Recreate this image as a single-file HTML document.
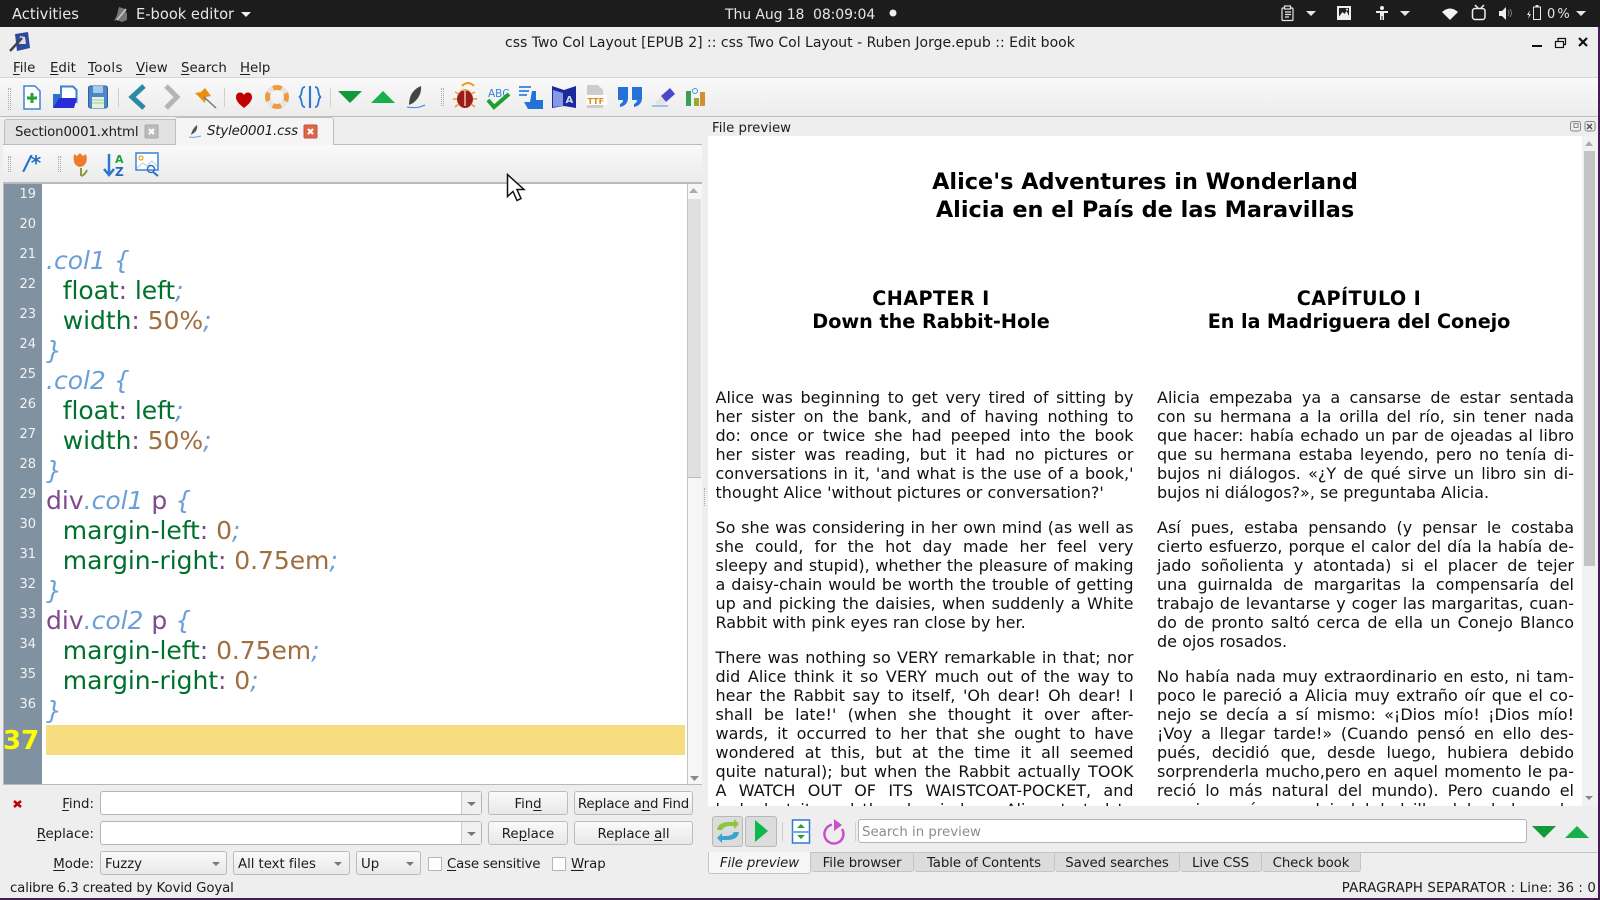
<!DOCTYPE html>
<html><head><meta charset="utf-8"><style>
html,body{margin:0;padding:0;width:1600px;height:900px;overflow:hidden;background:#eee;font-family:"DejaVu Sans","Liberation Sans",sans-serif;color:#1c1c1c}
div,span.a{position:absolute}
.t{position:absolute;white-space:nowrap;font-size:13.33px;line-height:16px}
u{text-underline-offset:2px}
.top{color:#e6e6e6;font-size:14.67px;line-height:18px;top:6px}
.sep{position:absolute;width:1px;background:#d0d0d0}
.dots{position:absolute;width:3px;border-left:1px dotted #aaa;border-right:1px dotted #aaa;box-sizing:border-box}
.tb{left:0;width:1598px;background:linear-gradient(#f9f9f9,#ececec)}
.n{position:absolute;left:4px;width:32px;text-align:right;color:#f2f2f2;font-size:13px;line-height:16px}
.c{position:absolute;left:46px;white-space:pre;font-size:25px;line-height:30px;color:#00702d;margin-top:1px}
.c.i{left:47px;letter-spacing:-.06px}
.s{color:#6a9fd8;font-style:italic}.k{color:#7c4b8e}.v{color:#9e6e3f}
.inp{position:absolute;background:#fff;border:1px solid #b4b4b4;border-radius:3px;box-sizing:border-box}
.btn{position:absolute;box-sizing:border-box;height:24px;border:1px solid #bbb;border-radius:3px;background:linear-gradient(#fafafa,#e8e8e8);text-align:center;font-size:13.33px;line-height:25px;white-space:nowrap;letter-spacing:-.05px}
.ptab{position:absolute;top:852px;height:20px;background:#dcdcdc;border:1px solid #c4c4c4;border-left:0;box-sizing:border-box;text-align:center;font-size:13.33px;line-height:21px;border-radius:0 0 3px 3px;letter-spacing:-.1px;white-space:nowrap}
.col{position:absolute;width:418px;font-size:16px;line-height:19px;color:#111}
.col span{display:block;white-space:nowrap;text-align:justify;text-align-last:justify;height:19px}
.col span.e{text-align:left;text-align-last:left}
.col i{display:block;height:16px}
.h{position:absolute;text-align:center;font-weight:bold;color:#000;white-space:nowrap}
.h b{letter-spacing:.4px}
</style></head><body>
<div style="left:0;top:0;width:1600px;height:27px;background:#1c1c1c"></div>
<div style="left:1598px;top:27px;width:2px;height:873px;background:#451a55"></div>
<div style="left:0;top:898px;width:1600px;height:2px;background:#451a55"></div>
<div class="t top" style="left:12px">Activities</div>
<div class="t top" style="left:136px">E-book editor</div>
<div class="t top" style="left:725px;font-size:14px;letter-spacing:-.1px">Thu Aug 18&nbsp; 08:09:04</div>
<div class="t" style="left:1547px;top:6px;font-size:13px;line-height:18px;color:#e6e6e6;word-spacing:-2px">0 %</div>

<div class="t" style="left:505px;top:35px;font-size:14px">css Two Col Layout [EPUB 2] :: css Two Col Layout - Ruben Jorge.epub :: Edit book</div>

<div class="t" style="left:13px;top:61px"><u>F</u>ile</div>
<div class="t" style="left:50px;top:61px"><u>E</u>dit</div>
<div class="t" style="left:88px;top:61px;letter-spacing:.4px"><u>T</u>ools</div>
<div class="t" style="left:136px;top:61px"><u>V</u>iew</div>
<div class="t" style="left:181px;top:61px"><u>S</u>earch</div>
<div class="t" style="left:240px;top:61px"><u>H</u>elp</div>

<div class="tb" style="top:77px;height:38px;border-top:1px solid #d4d4d4;border-bottom:1px solid #bdbdbd"></div>
<div class="dots" style="left:8px;top:88px;height:22px"></div>
<div class="sep" style="left:118px;top:88px;height:19px"></div>
<div class="sep" style="left:224px;top:88px;height:19px"></div>
<div class="sep" style="left:330px;top:88px;height:19px"></div>
<div class="dots" style="left:441px;top:88px;height:18px"></div>

<!-- tabs -->
<div style="left:3px;top:144px;width:699px;height:1px;background:#bbb"></div>
<div style="left:4px;top:119px;width:172px;height:25px;background:#e2e2e2;border:1px solid #c0c0c0;border-bottom:0;box-sizing:border-box;border-radius:3px 0 0 0"></div>
<div style="left:175px;top:117px;width:159px;height:28px;background:#f5f5f5;border:1px solid #c0c0c0;border-bottom:0;box-sizing:border-box;border-radius:3px 3px 0 0"></div>
<div class="t" style="left:15px;top:125px;letter-spacing:-.15px">Section0001.xhtml</div>
<div class="t" style="left:207px;top:124px;font-style:italic;letter-spacing:-.15px">Style0001.css</div>
<div class="tb" style="top:145px;left:3px;width:699px;height:37px;border-bottom:1px solid #bdbdbd"></div>
<div class="dots" style="left:8px;top:156px;height:16px"></div>
<div class="dots" style="left:58px;top:156px;height:16px"></div>
<div class="t" style="left:24px;top:150px;font-size:20px;line-height:26px;font-weight:bold;font-style:italic;color:#1f6fc4;letter-spacing:-.6px">/*</div>

<!-- editor -->
<div style="left:3px;top:183px;width:699px;height:602px;background:#fff;border:1px solid #b8b8b8;box-sizing:border-box"></div>
<div style="left:4px;top:184px;width:38px;height:600px;background:#8091a1"></div>
<div style="left:687px;top:184px;width:15px;height:600px;background:#f6f6f6;border-left:1px solid #c4c4c4;box-sizing:border-box"></div>
<div style="left:688px;top:199px;width:13px;height:278px;background:#e0e0e0;border-bottom:1px solid #bbb"></div>
<div style="left:46px;top:725px;width:639px;height:30px;background:#f7dd7f"></div>
<div class="n" style="top:187px">19</div><div class="n" style="top:217px">20</div><div class="n" style="top:247px">21</div><div class="n" style="top:277px">22</div><div class="n" style="top:307px">23</div><div class="n" style="top:337px">24</div><div class="n" style="top:367px">25</div><div class="n" style="top:397px">26</div><div class="n" style="top:427px">27</div><div class="n" style="top:457px">28</div><div class="n" style="top:487px">29</div><div class="n" style="top:517px">30</div><div class="n" style="top:547px">31</div><div class="n" style="top:577px">32</div><div class="n" style="top:607px">33</div><div class="n" style="top:637px">34</div><div class="n" style="top:667px">35</div><div class="n" style="top:697px">36</div>
<div class="t" style="left:3px;top:726px;font-size:26px;line-height:30px;font-weight:bold;color:#ffff00">37</div>
<div class="c" style="top:245px"><span class="s">.col1 {</span></div>
<div class="c i" style="top:275px">  float<span class="k">:</span> left<span class="s">;</span></div>
<div class="c i" style="top:305px">  width<span class="k">:</span> <span class="v">50%</span><span class="s">;</span></div>
<div class="c" style="top:335px"><span class="s">}</span></div>
<div class="c" style="top:365px"><span class="s">.col2 {</span></div>
<div class="c i" style="top:395px">  float<span class="k">:</span> left<span class="s">;</span></div>
<div class="c i" style="top:425px">  width<span class="k">:</span> <span class="v">50%</span><span class="s">;</span></div>
<div class="c" style="top:455px"><span class="s">}</span></div>
<div class="c" style="top:485px"><span class="k">div</span><span class="s">.col1</span><span class="k"> p </span><span class="s">{</span></div>
<div class="c i" style="top:515px">  margin-left<span class="k">:</span> <span class="v">0</span><span class="s">;</span></div>
<div class="c i" style="top:545px">  margin-right<span class="k">:</span> <span class="v">0.75em</span><span class="s">;</span></div>
<div class="c" style="top:575px"><span class="s">}</span></div>
<div class="c" style="top:605px"><span class="k">div</span><span class="s">.col2</span><span class="k"> p </span><span class="s">{</span></div>
<div class="c i" style="top:635px">  margin-left<span class="k">:</span> <span class="v">0.75em</span><span class="s">;</span></div>
<div class="c i" style="top:665px">  margin-right<span class="k">:</span> <span class="v">0</span><span class="s">;</span></div>
<div class="c" style="top:695px"><span class="s">}</span></div>

<!-- search -->
<div class="t" style="right:1506px;top:797px"><u>F</u>ind:</div>
<div class="t" style="right:1506px;top:827px"><u>R</u>eplace:</div>
<div class="t" style="right:1506px;top:857px"><u>M</u>ode:</div>
<div class="inp" style="left:100px;top:791px;width:382px;height:24px"></div>
<div class="inp" style="left:100px;top:821px;width:382px;height:24px"></div>
<div style="left:461px;top:792px;width:20px;height:22px;background:#f0f0f0;border-left:1px solid #ccc;box-sizing:border-box"></div>
<div style="left:461px;top:822px;width:20px;height:22px;background:#f0f0f0;border-left:1px solid #ccc;box-sizing:border-box"></div>
<div class="btn" style="left:488px;top:791px;width:80px">Fin<u>d</u></div>
<div class="btn" style="left:574px;top:791px;width:119px;letter-spacing:-.15px">Replace a<u>n</u>d Find</div>
<div class="btn" style="left:488px;top:821px;width:80px">Re<u>p</u>lace</div>
<div class="btn" style="left:574px;top:821px;width:119px">Replace <u>a</u>ll</div>
<div class="btn" style="left:100px;top:851px;width:127px;text-align:left;padding-left:4px">Fuzzy</div>
<div class="btn" style="left:233px;top:851px;width:117px;text-align:left;padding-left:4px">All text files</div>
<div class="btn" style="left:356px;top:851px;width:65px;text-align:left;padding-left:4px">Up</div>
<div class="inp" style="left:428px;top:857px;width:14px;height:14px;border-radius:1px"></div>
<div class="t" style="left:447px;top:857px;letter-spacing:-.2px"><u>C</u>ase sensitive</div>
<div class="inp" style="left:552px;top:857px;width:14px;height:14px;border-radius:1px"></div>
<div class="t" style="left:571px;top:857px"><u>W</u>rap</div>
<div class="t" style="left:10px;top:881px;letter-spacing:-.15px">calibre 6.3 created by Kovid Goyal</div>
<div class="t" style="right:4px;top:881px;letter-spacing:.12px">PARAGRAPH SEPARATOR : Line: 36 : 0</div>

<!-- preview -->
<div class="t" style="left:712px;top:121px">File preview</div>
<div style="left:708px;top:136px;width:889px;height:670px;background:#fff;overflow:hidden">
 <div class="h" style="left:0;width:874px;top:32px;font-size:22.4px;line-height:28px">Alice's Adventures in Wonderland<br>Alicia en el País de las Maravillas</div>
 <div class="h" style="left:0;width:446px;top:151px;font-size:19.2px;line-height:23px"><b>CHAPTER I</b><br>Down the Rabbit-Hole</div>
 <div class="h" style="left:429px;width:444px;top:151px;font-size:19.2px;line-height:23px"><b>CAPÍTULO I</b><br><span style="letter-spacing:-.08px">En la Madriguera del Conejo</span></div>
 <div class="col" style="left:7.5px;top:252px">
<span>Alice was beginning to get very tired of sitting by</span>
<span>her sister on the bank, and of having nothing to</span>
<span>do: once or twice she had peeped into the book</span>
<span>her sister was reading, but it had no pictures or</span>
<span>conversations in it, 'and what is the use of a book,'</span>
<span class="e">thought Alice 'without pictures or conversation?'</span><i></i>
<span>So she was considering in her own mind (as well as</span>
<span>she could, for the hot day made her feel very</span>
<span>sleepy and stupid), whether the pleasure of making</span>
<span>a daisy-chain would be worth the trouble of getting</span>
<span>up and picking the daisies, when suddenly a White</span>
<span class="e">Rabbit with pink eyes ran close by her.</span><i></i>
<span>There was nothing so VERY remarkable in that; nor</span>
<span>did Alice think it so VERY much out of the way to</span>
<span>hear the Rabbit say to itself, 'Oh dear! Oh dear! I</span>
<span>shall be late!' (when she thought it over after-</span>
<span>wards, it occurred to her that she ought to have</span>
<span>wondered at this, but at the time it all seemed</span>
<span>quite natural); but when the Rabbit actually TOOK</span>
<span>A WATCH OUT OF ITS WAISTCOAT-POCKET, and</span>
<span>looked at it, and then hurried on, Alice started to</span>
 </div>
 <div class="col" style="left:449px;width:417px;top:252px">
<span>Alicia empezaba ya a cansarse de estar sentada</span>
<span>con su hermana a la orilla del río, sin tener nada</span>
<span>que hacer: había echado un par de ojeadas al libro</span>
<span>que su hermana estaba leyendo, pero no tenía di-</span>
<span>bujos ni diálogos. «¿Y de qué sirve un libro sin di-</span>
<span class="e">bujos ni diálogos?», se preguntaba Alicia.</span><i></i>
<span>Así pues, estaba pensando (y pensar le costaba</span>
<span>cierto esfuerzo, porque el calor del día la había de-</span>
<span>jado soñolienta y atontada) si el placer de tejer</span>
<span>una guirnalda de margaritas la compensaría del</span>
<span>trabajo de levantarse y coger las margaritas, cuan-</span>
<span>do de pronto saltó cerca de ella un Conejo Blanco</span>
<span class="e">de ojos rosados.</span><i></i>
<span>No había nada muy extraordinario en esto, ni tam-</span>
<span>poco le pareció a Alicia muy extraño oír que el co-</span>
<span>nejo se decía a sí mismo: «¡Dios mío! ¡Dios mío!</span>
<span>¡Voy a llegar tarde!» (Cuando pensó en ello des-</span>
<span>pués, decidió que, desde luego, hubiera debido</span>
<span>sorprenderla mucho,pero en aquel momento le pa-</span>
<span>reció lo más natural del mundo). Pero cuando el</span>
<span>conejo sacó un reloj del bolsillo del chaleco, lo</span>
 </div>
</div>
<div style="left:1582px;top:136px;width:15px;height:670px;background:#f2f2f2"></div>
<div style="left:1584px;top:151px;width:11px;height:415px;background:#c4c4c4"></div>
<div class="dots" style="left:704px;top:488px;height:18px;border-right:0"></div>

<div style="left:712px;top:816px;width:31px;height:31px;background:#dcdcdc;border:1px solid #b8b8b8;box-sizing:border-box;border-radius:3px"></div>
<div style="left:745px;top:816px;width:32px;height:31px;background:#dcdcdc;border:1px solid #b8b8b8;box-sizing:border-box;border-radius:3px"></div>
<div class="sep" style="left:782px;top:822px;height:19px"></div>
<div class="sep" style="left:855px;top:822px;height:19px"></div>
<div class="inp" style="left:858px;top:819px;width:669px;height:24px;color:#8c8c8c;font-size:13.33px;line-height:25px;padding-left:3px">Search in preview</div>

<div style="left:708px;top:852px;width:890px;height:1px;background:#c4c4c4"></div>
<div class="ptab" style="left:811px;width:103px">File browser</div>
<div class="ptab" style="left:914px;width:141px">Table of Contents</div>
<div class="ptab" style="left:1055px;width:125px">Saved searches</div>
<div class="ptab" style="left:1180px;width:82px">Live CSS</div>
<div class="ptab" style="left:1262px;width:99px">Check book</div>
<div style="left:708px;top:852px;width:103px;height:22px;background:#f6f6f6;border:1px solid #c4c4c4;border-top:0;box-sizing:border-box;border-radius:0 0 3px 3px;text-align:center;font-size:13.33px;line-height:23px;font-style:italic;letter-spacing:-.1px">File preview</div>

<svg width="1600" height="900" viewBox="0 0 1600 900" style="position:absolute;left:0;top:0">
<!-- top bar -->
<path d="M119 7l6 2 2 5 0 6-5 2-5-2-3 1 3-6z" fill="#777"/><path d="M117 20l9-11" stroke="#ccc" stroke-width="1.5"/>
<path d="M241 12h10l-5 5z" fill="#eee"/>
<circle cx="893" cy="13" r="3.5" fill="#eee"/>
<g fill="none" stroke="#e6e6e6" stroke-width="1.2"><rect x="1282" y="8" width="11" height="12.5" rx="1"/><rect x="1284.5" y="6" width="6" height="3" fill="#1c1c1c"/><path d="M1285 12h6M1285 14.500h6M1285 17h4"/></g>
<path d="M1306 11h10l-5 5zM1400 11h10l-5 5zM1576 11h10l-5 5z" fill="#e6e6e6"/>
<rect x="1337" y="6" width="14" height="14" fill="#eee"/><rect x="1339" y="8" width="10" height="8" fill="#222"/><path d="M1339.500 16l3-4 2 2 2-3 2.500 5z" fill="#eee"/><circle cx="1347" cy="9.500" r="1" fill="#eee"/>
<circle cx="1382" cy="8" r="2" fill="#eee"/><path d="M1376 11h12v2h-4v7h-1.500v-4h-1v4h-1.500v-7h-4z" fill="#eee"/>
<path d="M1442 12q8-7 16 0l-8 8z" fill="#f2f2f2"/>
<path d="M1475 5l3 3M1484 5l-3 3" stroke="#eee" stroke-width="1.500"/><rect x="1472.500" y="8.500" width="12.500" height="11" rx="2.500" fill="none" stroke="#eee" stroke-width="1.500"/>
<path d="M1499 11h3l4-4v13l-4-4h-3z" fill="#eee"/><path d="M1508 10q2 3 0 6M1510 9q3 4 0 8" stroke="#777" fill="none"/>
<path d="M1530 10l-3 5h2l-1 4 3-5h-2z" fill="#e6e6e6"/><rect x="1533.500" y="7" width="7" height="12.500" fill="none" stroke="#e6e6e6"/><rect x="1535.500" y="5" width="3" height="2" fill="#e6e6e6"/>
<!-- app icon -->
<path d="M15 34l13-2 2 16-13 3z" fill="#2b4a9c"/><path d="M20 36l5 1 1 7-7 0z" fill="#dde"/><path d="M10 51l12-13" stroke="#444" stroke-width="2.500"/>
<!-- window buttons -->
<rect x="1532" y="45" width="10" height="2" fill="#111"/>
<g fill="none" stroke="#111" stroke-width="1.200"><rect x="1555.500" y="41.500" width="8" height="6"/><path d="M1558 41v-2.500h7.500v6h-2"/></g>
<path d="M1579 38l8 8M1587 38l-8 8" stroke="#111" stroke-width="2.200"/>
<!-- toolbar row -->
<path d="M24 86h11l5 5v18H24z" fill="#fff" stroke="#3b82d6" stroke-width="1.500"/><path d="M27 98h10M32 93v10" stroke="#21a33a" stroke-width="3"/>
<path d="M53 94h8v14H53z" fill="#2b71cf"/><path d="M61 86.500h12l3.500 3.500v12H61z" fill="#fff" stroke="#3b82d6" stroke-width="2"/><path d="M53 108l6-10h18l-3 10z" fill="#2a2ad8"/>
<rect x="88.500" y="86" width="19" height="22" rx="2" fill="#4a86c8" stroke="#2d62a8"/><rect x="93" y="86" width="10" height="7" fill="#a8c8ea"/><rect x="92" y="97" width="12" height="11" fill="#e4f1dd"/><path d="M92 100h12M92 103h12" stroke="#9fcfa0"/>
<path d="M144 86l-12 11 12 11" fill="none" stroke="#2a8aa8" stroke-width="5"/>
<path d="M166 86l11 11-11 11" fill="none" stroke="#b5b5b5" stroke-width="5"/>
<path d="M205 88L211 96 206 97 205 103 195 93 201 92z" fill="#e8900f"/><path d="M204 97l12 11" stroke="#777" stroke-width="1.500"/>
<path d="M244 108c-5-4-8-7-8-11 0-5 6-6 8-2 2-4 8-3 8 2 0 4-3 7-8 11z" fill="#c00000"/>
<circle cx="277" cy="97" r="9.500" fill="none" stroke="#e4e4e4" stroke-width="5"/><circle cx="277" cy="97" r="9.500" fill="none" stroke="#ef9a3e" stroke-width="5" stroke-dasharray="8.500 6.420" stroke-dashoffset="4.250"/>
<path d="M305 87c-5 0-2 9-6 10 4 1 1 10 6 10M315 87c5 0 2 9 6 10-4 1-1 10-6 10" fill="none" stroke="#2e78d8" stroke-width="1.800"/><path d="M310 86v22" stroke="#2e78d8" stroke-width="2.200"/>
<path d="M338 91h24l-12 12z" fill="#129a3a"/><path d="M371 103h24l-12-12z" fill="#17b04a"/>
<path d="M409 105q0-14 12-19 1 10-8 17z" fill="#444"/><path d="M407 107q10 2 18-2" stroke="#3b82d6" fill="none"/>
<path d="M462 86q3-3 6-3t6 3" stroke="#e89a20" fill="none" stroke-width="2"/><ellipse cx="465" cy="99" rx="8" ry="9" fill="#9c1c1c"/><path d="M465 91v15" stroke="#e8c0a0" stroke-width="1.500"/><path d="M453 99h4M473 99h4M455 92l4 2M475 92l-4 2M455 107l4-3M475 107l-4-3" stroke="#e89a20" stroke-width="1.500"/><path d="M460 91q5-4 10 0z" fill="#e8a640"/>
<text x="488" y="97" font-size="10.500" fill="#3b82d6" font-family="DejaVu Sans">ABC</text><path d="M488 100l6 7 15-13" fill="none" stroke="#1ca030" stroke-width="4"/>
<path d="M519 87h12M519 91h10M519 95h8" stroke="#4a90e0" stroke-width="2"/><path d="M532 91h4v9h7v9h-15l-4-7h6z" fill="#2372d8"/>
<path d="M552 86l12 4 12-4v22l-12-2-12 2z" fill="#1a2a9c"/><path d="M553 90l10 3v13l-10 1z" fill="#8898e8"/><text x="565.500" y="103" font-size="10" font-weight="bold" fill="#cde" font-family="DejaVu Sans">A</text>
<path d="M587 85h11l5 5v5h4v10h-4v3h-16z" fill="#ccc"/><rect x="587" y="95" width="20" height="10" fill="#fff"/><text x="587.500" y="104" font-size="8" font-weight="bold" fill="#e08a10" font-family="DejaVu Sans">TTF</text>
<path d="M618 87h10v11c0 5-3 8-8 9v-3c2-1 3-2 3-4h-5zM632 87h10v11c0 5-3 8-8 9v-3c2-1 3-2 3-4h-5z" fill="#2372d8"/>
<path d="M661 96l9-8 5 6-9 8z" fill="#4848c8"/><path d="M655 103l6-7 5 6-3 3h-6z" fill="#e4e4e4"/><path d="M652 106h16" stroke="#8ab0e0" stroke-width="1.500"/>
<rect x="686" y="91" width="5" height="15" fill="#3aa058"/><rect x="694" y="98" width="5" height="8" fill="#98a830"/><rect x="700" y="92" width="5" height="14" fill="#d09030"/><circle cx="695" cy="91" r="2.500" fill="none" stroke="#4a90e0"/>
<!-- tab icons -->
<rect x="145" y="125" width="13" height="13" rx="1" fill="#bbb" stroke="#aaa"/><path d="M149 129l5 5M154 129l-5 5" stroke="#fff" stroke-width="2"/>
<rect x="304" y="125" width="13" height="13" rx="1" fill="#e0654a" stroke="#c0533c"/><path d="M308 129l5 5M313 129l-5 5" stroke="#fff" stroke-width="2"/>
<path d="M191 135q1-6 6-10 1 5-3 8z" fill="#555"/><path d="M189 137q5 1 12-1" stroke="#6aa0e0" fill="none"/>
<!-- toolbar 2 -->
<path d="M74 154l3 2 3-3 3 3 3-2c2 7 0 12-6 13-6-1-7-6-6-13z" fill="#ef7b2c"/><path d="M81 168l0 8M81 176q4-1 6-6" stroke="#8a9a40" stroke-width="2" fill="none"/>
<path d="M109 154v20M104 169l5 6 5-6" fill="none" stroke="#2a78d0" stroke-width="2.500"/>
<text x="115" y="163" font-size="11" font-weight="bold" fill="#20a040" font-family="DejaVu Sans">A</text><text x="115" y="176" font-size="12" font-weight="bold" fill="#2468c0" font-family="DejaVu Sans">Z</text>
<rect x="136" y="153" width="22" height="17" fill="#fff" stroke="#3b82d6" stroke-width="1.500"/><circle cx="141" cy="158" r="2" fill="none" stroke="#e8a020" stroke-width="1.200"/><path d="M137 168l6-5 4 3 5-5 5 5" stroke="#bcd" fill="none"/><circle cx="151" cy="169" r="3.500" fill="none" stroke="#2a70c8" stroke-width="1.500"/><path d="M153 172l5 4" stroke="#2a70c8" stroke-width="2"/>
<!-- scrollbar arrows -->
<path d="M689 193h9l-4.500-5zM1585 146h8l-4-5z" fill="#aaa"/><path d="M690 776h9l-4.500 5z" fill="#888"/><path d="M1585 796h8l-4 4z" fill="#888"/>
<!-- dock buttons -->
<g fill="none" stroke="#888"><rect x="1570.500" y="121.500" width="10" height="9.500" rx="2"/><rect x="1585" y="121.500" width="10" height="9.500" rx="2"/><rect x="1574" y="123.500" width="4" height="4" /><path d="M1587 124l5 5M1592 124l-5 5" stroke="#555" stroke-width="1.500"/></g>
<!-- find -->
<path d="M14 801l7 6M21 801l-7 6" stroke="#c00000" stroke-width="2.500"/>
<path d="M467 802h9l-4.500 4zM467 832h9l-4.500 4zM212 862h8l-4 4zM334 862h8l-4 4zM406 862h8l-4 4z" fill="#777"/>
<!-- preview controls -->
<path d="M717 830q1-8 12-8h5v-3l5 5-5 5v-3h-4q-6 0-8 4z" fill="#8cc63f"/><path d="M739 832q-1 8-12 8h-5v3l-5-5 5-5v3h4q6 0 8-4z" fill="#3aa6d0"/>
<path d="M755 820l13 11-13 11z" fill="#0cb84c"/>
<rect x="792.500" y="820" width="17" height="23" fill="#fff" stroke="#2e78d8" stroke-width="1.500"/><rect x="792.500" y="831" width="17" height="2" fill="#7aa8e0"/><path d="M797 828l4-4 4 4zM797 835l4 4 4-4z" fill="#28a040"/>
<path d="M842 829A9.500 9.500 0 1 1 832 824.700" fill="none" stroke="#c850c8" stroke-width="2.500"/><path d="M834 819l8 6-8 6z" fill="#c850c8"/>
<path d="M1532 826h24l-12 12z" fill="#129a3a"/><path d="M1565 838h24l-12-12z" fill="#17b04a"/>
<!-- cursor -->
<path d="M507.500 174.500v22l5.500-5 4 9 4-2-4-9h7z" fill="#fff" stroke="#111" stroke-width="1.500"/>
</svg>
</body></html>
